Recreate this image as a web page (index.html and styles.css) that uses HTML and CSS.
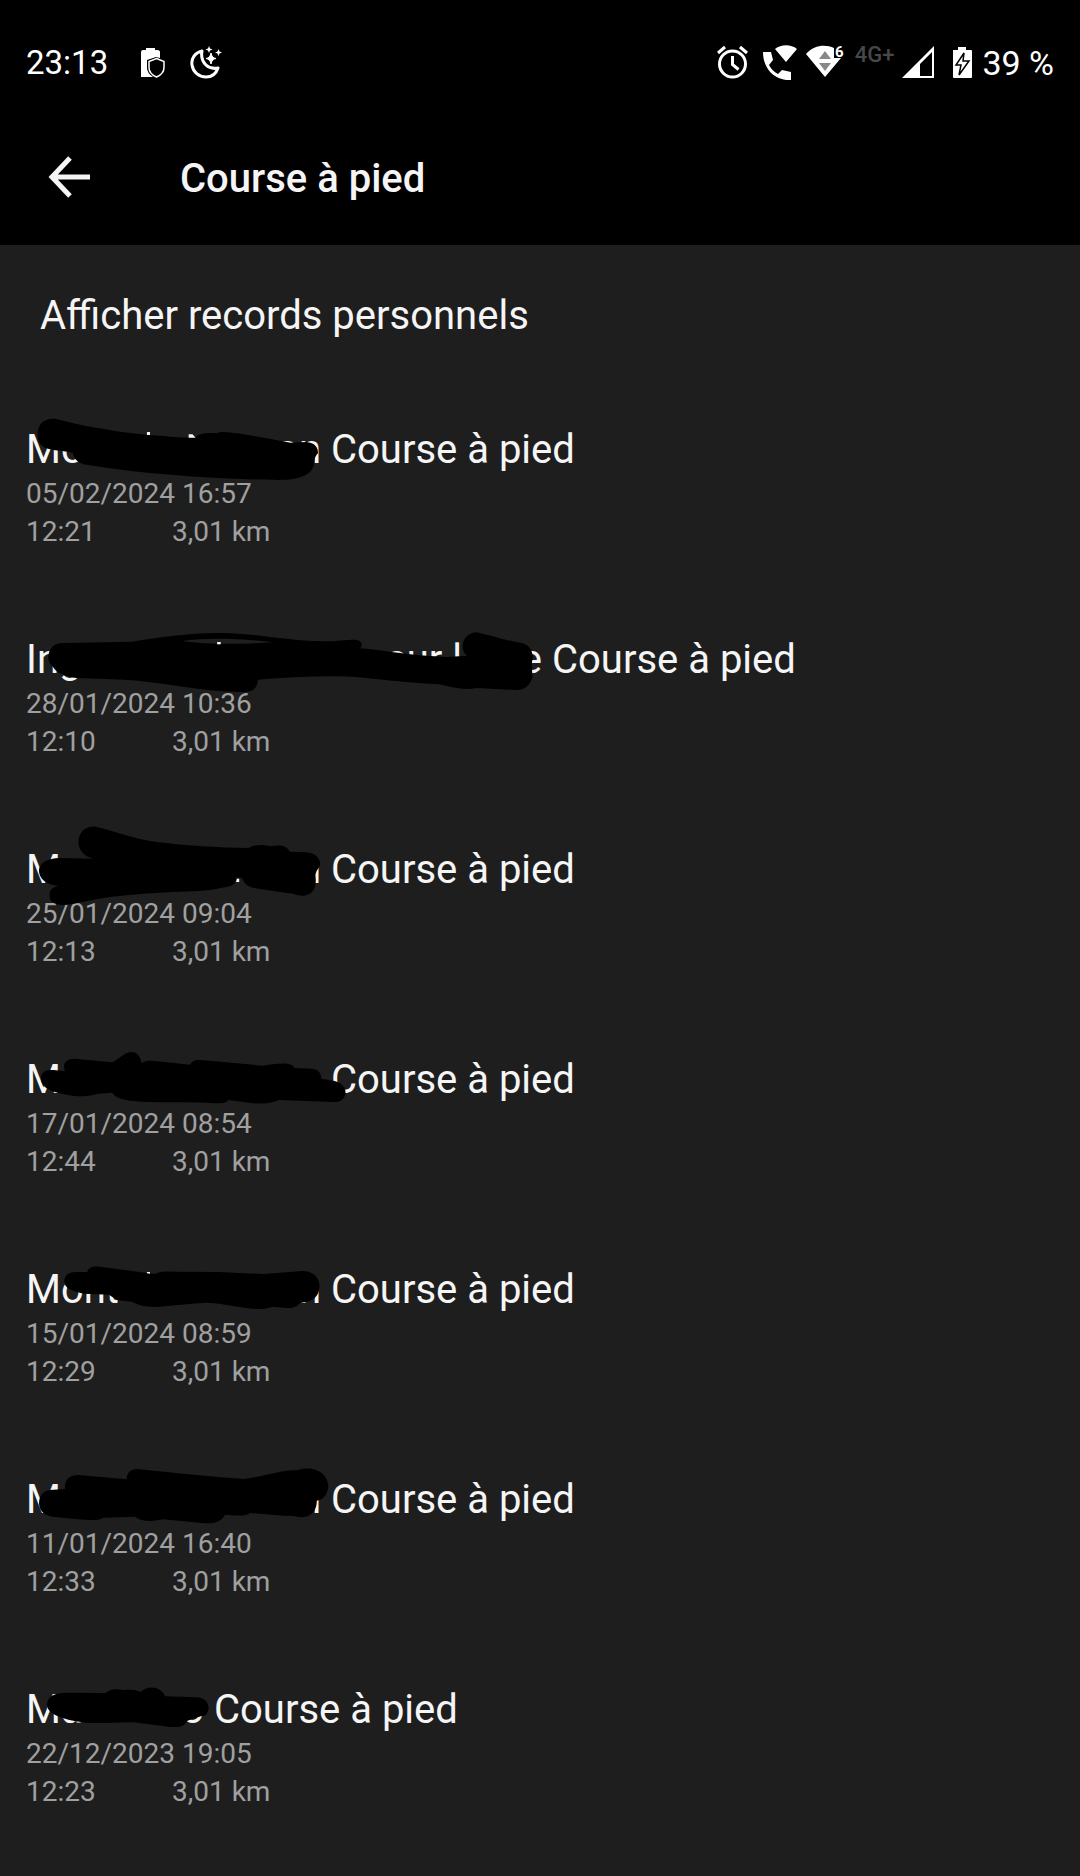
FILE: index.html
```html
<!doctype html>
<html lang="fr">

<head>
    <meta charset="UTF-8">
    <meta name="viewport" content="width=device-width, initial-scale=1.0">
    <title>Course à pied</title>
    <link rel="stylesheet" href="styles.css">
</head>

<body>
    <div class="status">
        <div class="status_left">
            <span class="clock">23:13</span>
            <svg width="24" height="36" viewBox="0 0 24 36">
                <path fill="#fff" d="M0 7q0-2 2-2h3V3h9v2h2q3 0 3 2v6l-4-1-9 3v8q0 5 6 9H0z" />
                <path fill="#000" stroke="#fff" stroke-width="1.5" d="M15.500 13.500l7.500 3v6c0 5-4 8-7.500 9.500-3.500-1.500-7.500-4.500-7.500-9.500v-6z" />
            </svg>
            <svg width="32" height="36" viewBox="0 0 32 36">
                <path fill="none" stroke="#fff" stroke-width="3" stroke-linejoin="round" d="M12 6C5 8 1 13 2 20c1 7 7 12 14 12 6 0 10-3 12-9-5 1-9 0-12-3-4-4-5-9-4-14z" />
                <path fill="#fff" d="M21 8q1 5 5 5.500-4 .5-5 5.500-1-5-5-5.500 4-.5 5-5.500z" stroke="#fff" />
                <path fill="#fff" d="M19 1l1 2.500 2.500 1-2.500 1-1 2.500-1-2.500-2.500-1 2.500-1zM28.500 4l1 2.500 2.500 1-2.500 1-1 2.500-1-2.500-2.500-1 2.500-1z" />
            </svg>
        </div>
        <div class="status_right">
            <svg width="43" height="36" viewBox="0 0 43 36">
                <g fill="none" stroke="#fff" stroke-width="3">
                    <circle cx="21.500" cy="19" r="13" />
                    <path d="M7 8l7-6M29 2l7 6" />
                    <path d="M21.500 11v8.500l6 5" />
                </g>
            </svg>
            <svg width="36" height="36" viewBox="0 0 36 36">
                <path fill="#fff" d="M1 7h8l2 8-4 5c2 4 5 7 9 9l4-4 9 2v8C13 36 1 24 1 7zM13 4c6-5 16-5 22 0L24 17z" />
            </svg>
            <svg width="41" height="36" viewBox="0 0 41 36" overflow="visible">
                <path fill="#fff" d="M0 9C8 0 19-1 28 3v10h7L19 32z" />
                <path fill="#888" d="M19 6l6 8H13zM13 18h12l-6 8z" />
                <text class="wifi_gen" x="29" y="12">6</text>
            </svg>
            <span class="network">4G+</span>
            <svg width="35" height="36" viewBox="0 0 35 36">
                <path fill="#fff" fill-rule="evenodd" d="M0 33L32 1v32zM18 19v12h12V7z" />
            </svg>
            <svg width="29" height="36" viewBox="0 0 29 36">
                <path fill="#fff" d="M8 5h5V2h8v3h5q1 0 1 1v26q0 1-1 1H9q-1 0-1-1z" />
                <path fill="#fff" stroke="#000" stroke-width="1.500" d="M19 8l-8 12h5l-2 10 10-14h-6z" />
            </svg>
            <span class="battery">39 %</span>
        </div>
    </div>

    <header class="header">
        <button type="button" class="back" aria-label="Retour">
            <svg width="48" height="48" viewBox="0 0 48 48">
                <path fill="none" stroke="#f5f5f5" stroke-width="5" d="M44 22H7M24 3L6 22l18 19" />
            </svg>
        </button>
        <h1 class="title">Course à pied</h1>
    </header>

    <main>
        <a href="#" class="records">Afficher records personnels</a>

        <ul class="list">
            <li class="run">
                <h2 class="run_title"><span class="place"><span>Mo</span><span>on</span></span> Course à pied</h2>
                <div class="date">05/02/2024 16:57</div>
                <div class="stats"><span class="time">12:21</span><span>3,01 km</span></div>
                <svg class="scribble" viewBox="0 0 1568 420" preserveAspectRatio="none">
                    <path d="M98 75C98 35 125 22 150 28 240 55 320 68 400 76 440 80 480 84 510 83 525 68 540 68 565 70 580 62 600 67 620 70 670 78 720 90 760 98L800 96C825 98 832 115 831 130 822 140 822 150 821 160 818 195 780 210 730 210 560 206 390 195 230 165 205 162 192 145 190 128L160 122C115 120 98 105 98 75z" />
                    <path class="tip" d="M384 66h8v9h-8zM493 73h10l8 10h-18z" />
                </svg>
            </li>
            <li class="run">
                <h2 class="run_title"><span class="place place_long"><span>Ing</span><span class="middle">sur l</span><span>e</span></span> Course à pied</h2>
                <div class="date">28/01/2024 10:36</div>
                <div class="stats"><span class="time">12:10</span><span>3,01 km</span></div>
                <svg class="scribble" viewBox="0 0 1680 420" preserveAspectRatio="none">
                    <path fill-rule="evenodd" d="M135 110C138 80 155 68 180 69L370 65C450 52 530 38 620 39 720 40 800 62 900 64 940 64 970 59 995 59 1012 60 1018 75 1008 85 1090 93 1160 108 1250 111L1308 107C1285 90 1293 40 1335 37 1370 45 1410 60 1450 67 1480 70 1492 90 1492 115 1487 130 1490 150 1491 170 1485 195 1470 210 1445 210L1335 204C1300 212 1270 203 1230 193 1150 188 1080 180 1020 173 930 165 830 170 722 179 720 200 715 216 675 216 560 214 450 185 350 179L215 174C180 170 155 155 148 140 138 130 135 120 135 110zM510 63C580 52 690 56 765 67 700 72 580 75 510 63z" />
                    <path class="tip" d="M608 66h10v7h-10z" />
                </svg>
            </li>
            <li class="run">
                <h2 class="run_title"><span class="place"><span>M</span><span>n</span></span> Course à pied</h2>
                <div class="date">25/01/2024 09:04</div>
                <div class="stats"><span class="time">12:13</span><span>3,01 km</span></div>
                <svg class="scribble" viewBox="0 30 1568 420" preserveAspectRatio="none">
                    <path d="M205 68C205 35 225 18 250 20 300 33 350 57 410 66 490 78 570 83 650 84 665 72 690 73 705 79 730 73 750 76 757 95L800 97C825 99 837 115 837 135 832 148 822 155 825 175 827 205 815 227 790 227 775 227 770 220 750 219L680 207C650 203 640 195 632 174L617 172C617 195 605 200 580 203 540 215 500 213 450 216 350 222 290 228 230 243 200 250 180 255 165 255 135 255 128 240 130 220 131 205 145 200 153 198 115 195 100 170 102 148 105 128 125 115 155 114L245 116C220 110 206 90 205 68z" />
                    <path class="tip" d="M619 176h6v10h-8z" />
                </svg>
            </li>
            <li class="run">
                <h2 class="run_title"><span class="place"><span>M</span></span> Course à pied</h2>
                <div class="date">17/01/2024 08:54</div>
                <div class="stats"><span class="time">12:44</span><span>3,01 km</span></div>
                <svg class="scribble" viewBox="0 0 1568 420" preserveAspectRatio="none">
                    <path d="M107 115C108 95 120 88 140 90L170 94C162 72 172 56 195 56L293 67C315 55 325 36 345 36 362 38 368 55 370 70 380 62 390 62 405 63L497 74C503 62 510 59 525 60L685 77C720 72 760 62 770 84L815 86C832 88 840 100 840 117 875 120 900 128 903 155 903 175 892 187 870 186L730 180C700 192 680 193 650 188L597 180C590 190 580 190 560 190 500 184 440 188 390 186 340 183 305 180 293 158L255 161C220 173 200 170 165 162 125 153 107 140 107 115z" />
                </svg>
            </li>
            <li class="run">
                <h2 class="run_title"><span class="place"><span>Mont</span><span>n</span></span> Course à pied</h2>
                <div class="date">15/01/2024 08:59</div>
                <div class="stats"><span class="time">12:29</span><span>3,01 km</span></div>
                <svg class="scribble" viewBox="0 0 1568 420" preserveAspectRatio="none">
                    <path d="M168 92C170 72 182 64 205 66L228 66C232 50 245 48 265 51L405 72C420 62 440 65 460 65L570 66 690 72 790 63C820 63 835 85 835 108 835 135 820 158 785 158 770 178 755 175 712 170 690 180 670 178 640 173 600 167 560 157 535 158 500 162 470 163 410 171 370 170 360 163 345 155L305 150 285 134 220 131C185 122 168 115 168 92z" />
                    <path class="tip" d="M384 66h8v5l-8-1z" />
                </svg>
            </li>
            <li class="run">
                <h2 class="run_title"><span class="place"><span>M</span><span>n</span></span> Course à pied</h2>
                <div class="date">11/01/2024 16:40</div>
                <div class="stats"><span class="time">12:33</span><span>3,01 km</span></div>
                <svg class="scribble" viewBox="0 0 1568 420" preserveAspectRatio="none">
                    <path d="M102 130C102 100 120 88 140 89L170 87C168 60 180 45 205 45L331 58C331 38 340 27 360 27 450 38 550 50 637 57 690 50 730 30 780 30 820 15 858 40 858 80 855 105 845 118 828 122 828 150 815 172 785 172 770 170 765 166 750 168L655 159C640 170 620 167 588 164 575 188 560 190 535 190L425 178C395 186 370 185 353 170L270 173C255 183 235 182 145 171 115 170 102 150 102 130z" />
                </svg>
            </li>
            <li class="run">
                <h2 class="run_title"><span class="place place_short"><span>Ma</span><span>o</span></span> Course à pied</h2>
                <div class="date">22/12/2023 19:05</div>
                <div class="stats"><span class="time">12:23</span><span>3,01 km</span></div>
                <svg class="scribble" viewBox="0 0 1568 420" preserveAspectRatio="none">
                    <path d="M123 105C123 80 140 68 175 68L275 69C290 55 305 56 325 60 345 58 355 60 368 66 385 45 420 48 432 79L515 82C538 84 545 100 545 115 543 132 535 140 525 139L490 152C480 172 465 172 440 170L350 157C310 155 270 162 225 158 160 150 123 130 123 105z" />
                </svg>
            </li>
        </ul>
    </main>
</body>

</html>
```
FILE: styles.css
```css
body {
    margin: 0;
    background: #1e1e1e;
    color: #f5f5f5;
    font-family: Roboto, sans-serif;
    font-size: 40px;
    line-height: 50px;
}

.status {
    display: flex;
    justify-content: space-between;
    height: 126px;
    padding: 0 26px;
    background: #000;
    color: #fff;
    font-size: 33px;
}

.status_left,
.status_right {
    display: flex;
    align-items: center;
    gap: 8px;
}

.clock {
    margin-right: 25px;
}

.status_left svg {
    margin-right: 17px;
}

.battery {
    font-size: 34px;
}

.network {
    color: #484848;
    font-size: 22px;
    font-weight: 500;
    line-height: 22px;
    padding-bottom: 16px;
}

.wifi_gen {
    fill: #fff;
    font-size: 15px;
    font-weight: 700;
}

.header {
    display: flex;
    align-items: center;
    gap: 86px;
    padding: 28px 46px 41px;
    background: #000;
}

.back {
    display: flex;
    padding: 0;
    border: 0;
    background: none;
    cursor: pointer;
}

.title {
    margin: 0;
    font-size: 40px;
    font-weight: 500;
}

.records {
    display: block;
    padding: 46px 40px 42px;
    color: inherit;
    text-decoration: none;
}

.list {
    margin: 0;
    padding: 0;
    list-style: none;
}

.run {
    position: relative;
    padding: 42px 26px;
}

.run_title {
    display: flex;
    gap: 10px;
    margin: 0;
    font-size: 40px;
    font-weight: 400;
}

.place {
    display: flex;
    justify-content: space-between;
    width: 295px;
}

.place_long {
    width: 516px;
}

.place_long .middle {
    margin-left: 246px;
}

.place_short {
    width: 178px;
}

.date,
.stats {
    color: #a0a0a0;
    font-size: 28px;
    line-height: 38px;
}

.stats {
    display: flex;
}

.time {
    width: 146px;
}

/* black marker strokes over the place names */
.scribble {
    position: absolute;
    top: 27px;
    left: 0;
    width: 600px;
    height: 140px;
    overflow: visible;
    pointer-events: none;
}

.scribble .tip {
    fill: #f5f5f5;
}
```
